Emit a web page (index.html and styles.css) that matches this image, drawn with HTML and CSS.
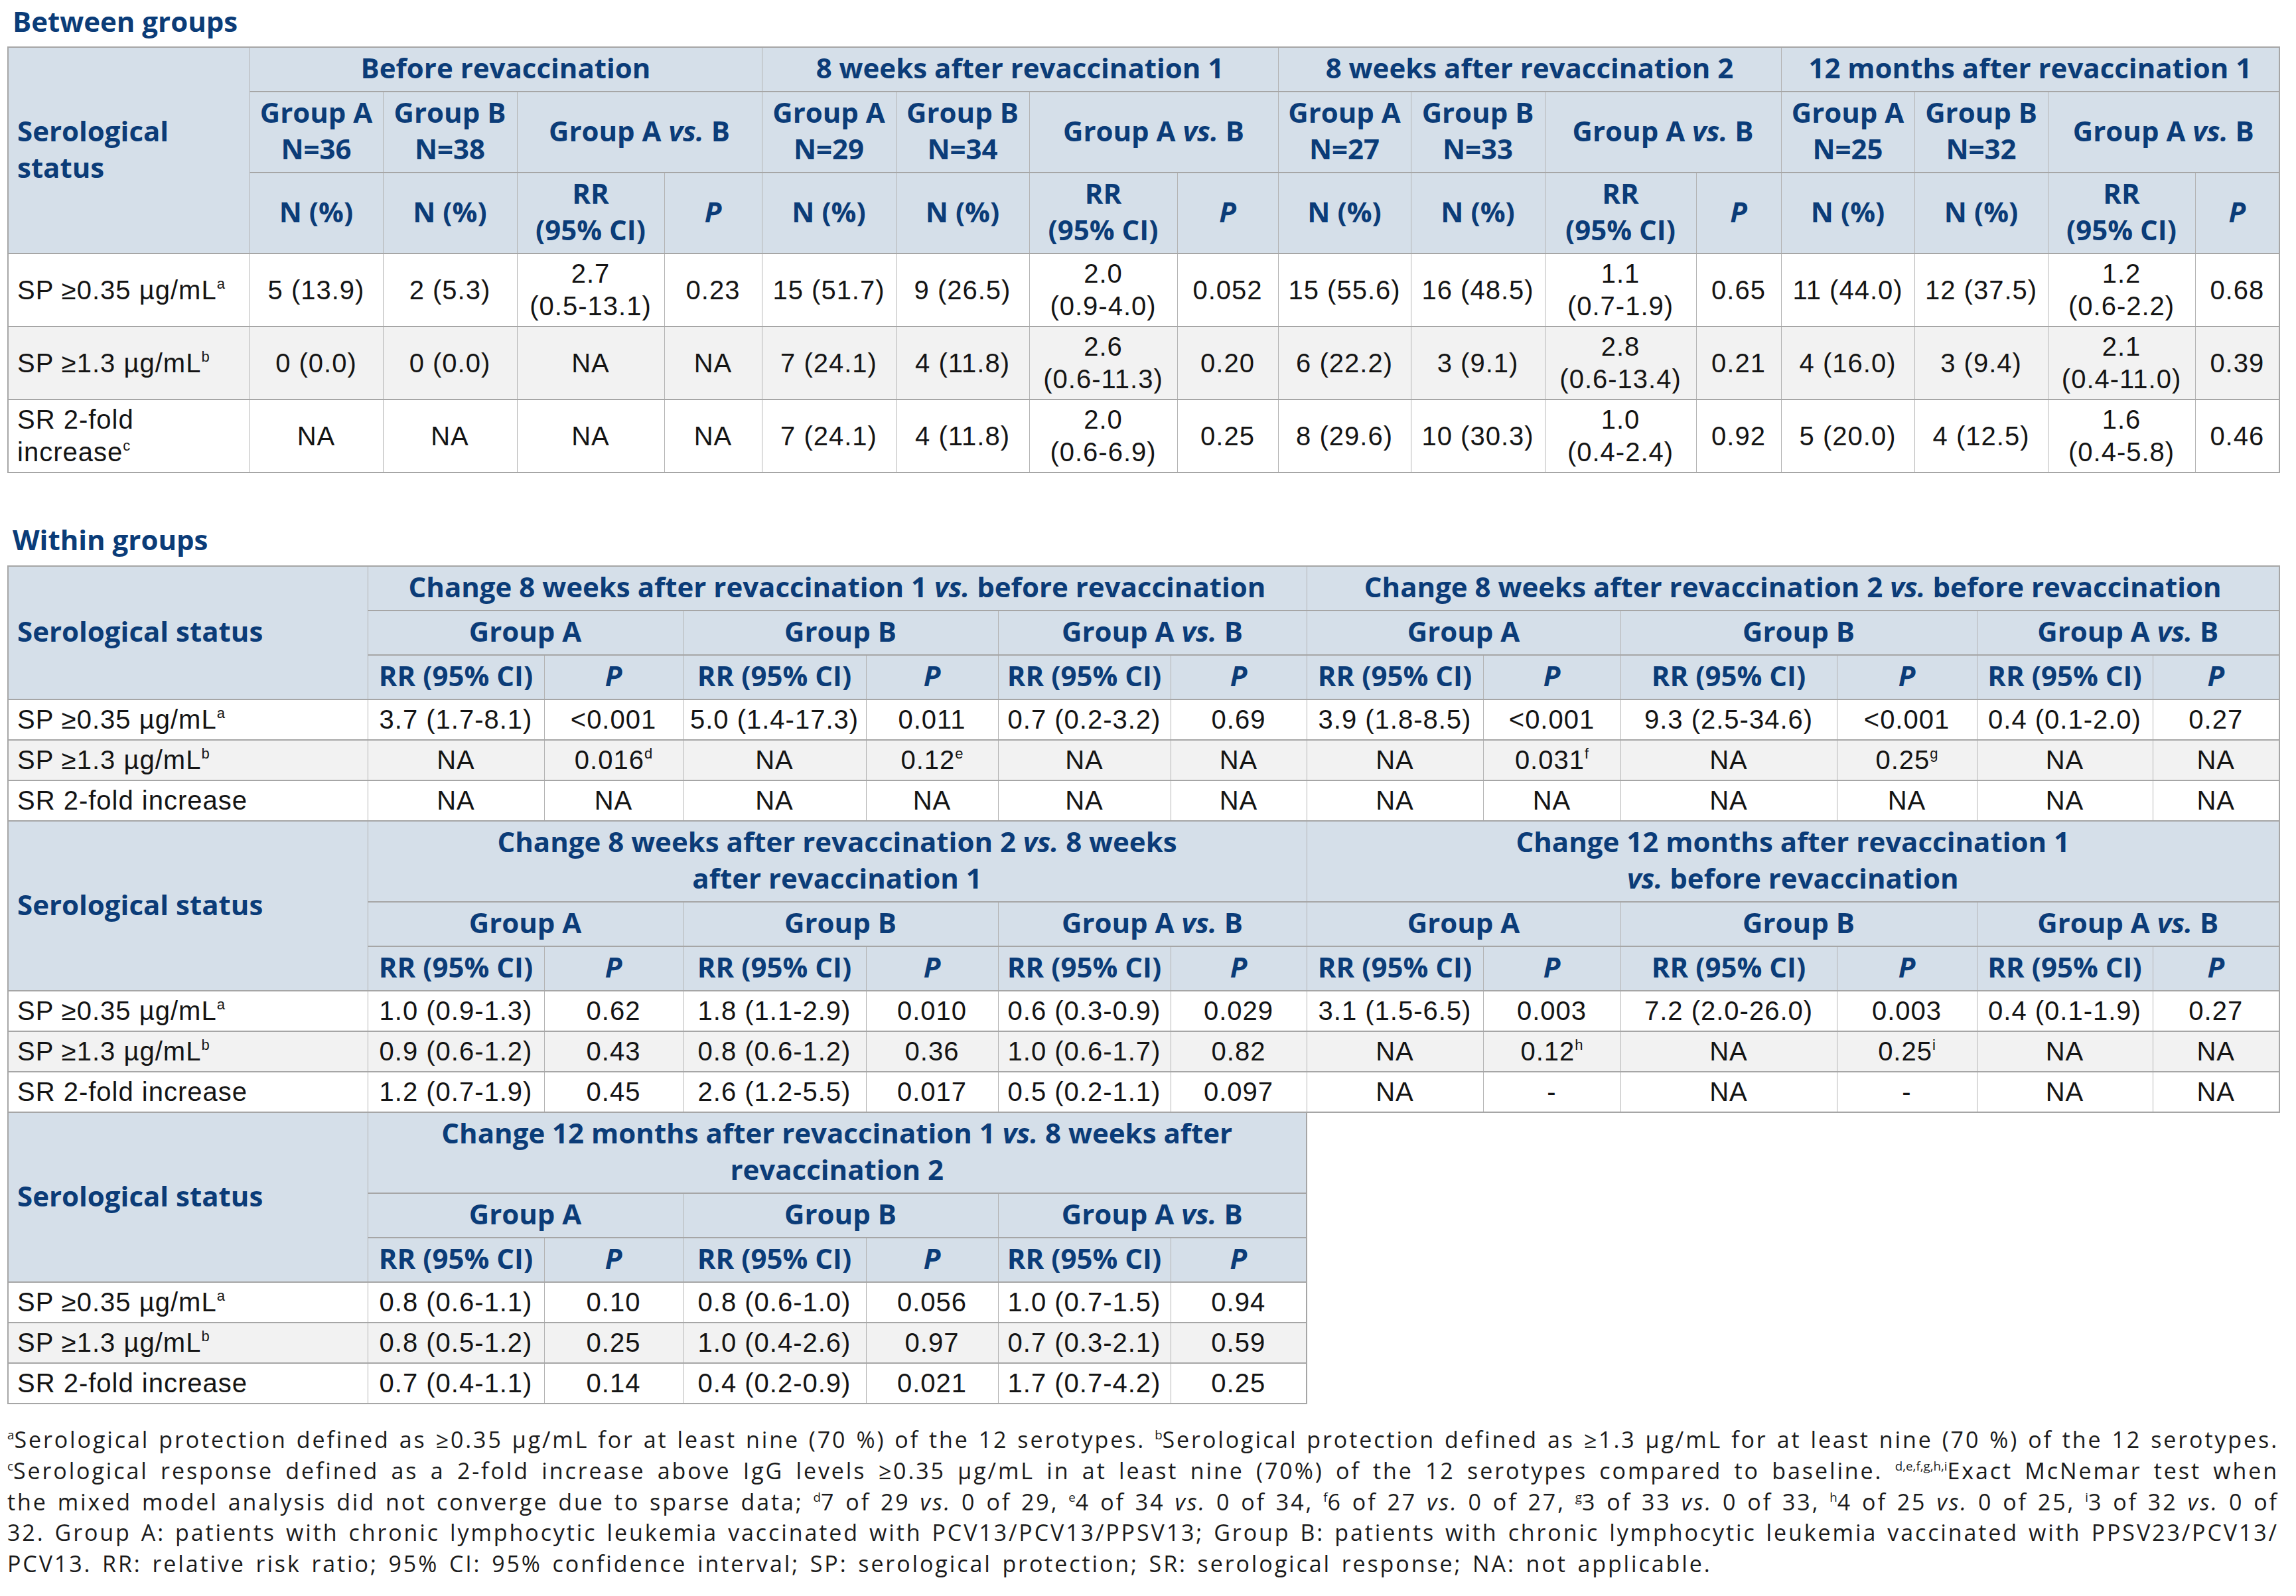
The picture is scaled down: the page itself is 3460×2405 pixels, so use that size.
FILE: index.html
```html
<!DOCTYPE html>
<html lang="en">
<head>
<meta charset="utf-8">
<title>Serological status</title>
<link rel="stylesheet" href="styles.css">
</head>
<body>
<h2 class="section-title first">Between groups</h2>
<table class="grid t1">
  <colgroup>
    <col><col><col><col><col><col><col><col><col><col><col><col><col><col><col><col><col>
  </colgroup>
  <thead>
    <tr>
      <th class="stub" rowspan="3">Serological<br>status</th>
      <th colspan="4">Before revaccination</th>
      <th colspan="4">8 weeks after revaccination 1</th>
      <th colspan="4">8 weeks after revaccination 2</th>
      <th colspan="4">12 months after revaccination 1</th>
    </tr>
    <tr>
      <th>Group A<br>N=36</th><th>Group B<br>N=38</th><th colspan="2">Group A <i>vs.</i> B</th>
      <th>Group A<br>N=29</th><th>Group B<br>N=34</th><th colspan="2">Group A <i>vs.</i> B</th>
      <th>Group A<br>N=27</th><th>Group B<br>N=33</th><th colspan="2">Group A <i>vs.</i> B</th>
      <th>Group A<br>N=25</th><th>Group B<br>N=32</th><th colspan="2">Group A <i>vs.</i> B</th>
    </tr>
    <tr>
      <th>N (%)</th><th>N (%)</th><th>RR<br>(95% CI)</th><th><i>P</i></th>
      <th>N (%)</th><th>N (%)</th><th>RR<br>(95% CI)</th><th><i>P</i></th>
      <th>N (%)</th><th>N (%)</th><th>RR<br>(95% CI)</th><th><i>P</i></th>
      <th>N (%)</th><th>N (%)</th><th>RR<br>(95% CI)</th><th><i>P</i></th>
    </tr>
  </thead>
  <tbody>
    <tr>
      <td class="stub">SP ≥0.35 µg/mL<sup>a</sup></td>
      <td>5 (13.9)</td><td>2 (5.3)</td><td>2.7<br>(0.5-13.1)</td><td>0.23</td>
      <td>15 (51.7)</td><td>9 (26.5)</td><td>2.0<br>(0.9-4.0)</td><td>0.052</td>
      <td>15 (55.6)</td><td>16 (48.5)</td><td>1.1<br>(0.7-1.9)</td><td>0.65</td>
      <td>11 (44.0)</td><td>12 (37.5)</td><td>1.2<br>(0.6-2.2)</td><td>0.68</td>
    </tr>
    <tr class="alt">
      <td class="stub">SP ≥1.3 µg/mL<sup>b</sup></td>
      <td>0 (0.0)</td><td>0 (0.0)</td><td>NA</td><td>NA</td>
      <td>7 (24.1)</td><td>4 (11.8)</td><td>2.6<br>(0.6-11.3)</td><td>0.20</td>
      <td>6 (22.2)</td><td>3 (9.1)</td><td>2.8<br>(0.6-13.4)</td><td>0.21</td>
      <td>4 (16.0)</td><td>3 (9.4)</td><td>2.1<br>(0.4-11.0)</td><td>0.39</td>
    </tr>
    <tr>
      <td class="stub">SR 2-fold<br>increase<sup>c</sup></td>
      <td>NA</td><td>NA</td><td>NA</td><td>NA</td>
      <td>7 (24.1)</td><td>4 (11.8)</td><td>2.0<br>(0.6-6.9)</td><td>0.25</td>
      <td>8 (29.6)</td><td>10 (30.3)</td><td>1.0<br>(0.4-2.4)</td><td>0.92</td>
      <td>5 (20.0)</td><td>4 (12.5)</td><td>1.6<br>(0.4-5.8)</td><td>0.46</td>
    </tr>
  </tbody>
</table>

<h2 class="section-title second">Within groups</h2>
<table class="grid t2">
  <colgroup>
    <col><col><col><col><col><col><col><col><col><col><col><col><col>
  </colgroup>
  <tbody>
    <tr>
      <th class="stub" rowspan="3">Serological status</th>
      <th colspan="6">Change 8 weeks after revaccination 1 <i>vs.</i> before revaccination</th>
      <th colspan="6">Change 8 weeks after revaccination 2 <i>vs.</i> before revaccination</th>
    </tr>
    <tr>
      <th colspan="2">Group A</th><th colspan="2">Group B</th><th colspan="2">Group A <i>vs.</i> B</th>
      <th colspan="2">Group A</th><th colspan="2">Group B</th><th colspan="2">Group A <i>vs.</i> B</th>
    </tr>
    <tr>
      <th>RR (95% CI)</th><th><i>P</i></th><th>RR (95% CI)</th><th><i>P</i></th><th>RR (95% CI)</th><th><i>P</i></th>
      <th>RR (95% CI)</th><th><i>P</i></th><th>RR (95% CI)</th><th><i>P</i></th><th>RR (95% CI)</th><th><i>P</i></th>
    </tr>
    <tr>
      <td class="stub">SP ≥0.35 µg/mL<sup>a</sup></td>
      <td>3.7 (1.7-8.1)</td><td>&lt;0.001</td><td>5.0 (1.4-17.3)</td><td>0.011</td><td>0.7 (0.2-3.2)</td><td>0.69</td>
      <td>3.9 (1.8-8.5)</td><td>&lt;0.001</td><td>9.3 (2.5-34.6)</td><td>&lt;0.001</td><td>0.4 (0.1-2.0)</td><td>0.27</td>
    </tr>
    <tr class="alt">
      <td class="stub">SP ≥1.3 µg/mL<sup>b</sup></td>
      <td>NA</td><td>0.016<sup>d</sup></td><td>NA</td><td>0.12<sup>e</sup></td><td>NA</td><td>NA</td>
      <td>NA</td><td>0.031<sup>f</sup></td><td>NA</td><td>0.25<sup>g</sup></td><td>NA</td><td>NA</td>
    </tr>
    <tr>
      <td class="stub">SR 2-fold increase</td>
      <td>NA</td><td>NA</td><td>NA</td><td>NA</td><td>NA</td><td>NA</td>
      <td>NA</td><td>NA</td><td>NA</td><td>NA</td><td>NA</td><td>NA</td>
    </tr>

    <tr>
      <th class="stub" rowspan="3">Serological status</th>
      <th colspan="6">Change 8 weeks after revaccination 2 <i>vs.</i> 8 weeks<br>after revaccination 1</th>
      <th colspan="6">Change 12 months after revaccination 1<br><i>vs.</i> before revaccination</th>
    </tr>
    <tr>
      <th colspan="2">Group A</th><th colspan="2">Group B</th><th colspan="2">Group A <i>vs.</i> B</th>
      <th colspan="2">Group A</th><th colspan="2">Group B</th><th colspan="2">Group A <i>vs.</i> B</th>
    </tr>
    <tr>
      <th>RR (95% CI)</th><th><i>P</i></th><th>RR (95% CI)</th><th><i>P</i></th><th>RR (95% CI)</th><th><i>P</i></th>
      <th>RR (95% CI)</th><th><i>P</i></th><th>RR (95% CI)</th><th><i>P</i></th><th>RR (95% CI)</th><th><i>P</i></th>
    </tr>
    <tr>
      <td class="stub">SP ≥0.35 µg/mL<sup>a</sup></td>
      <td>1.0 (0.9-1.3)</td><td>0.62</td><td>1.8 (1.1-2.9)</td><td>0.010</td><td>0.6 (0.3-0.9)</td><td>0.029</td>
      <td>3.1 (1.5-6.5)</td><td>0.003</td><td>7.2 (2.0-26.0)</td><td>0.003</td><td>0.4 (0.1-1.9)</td><td>0.27</td>
    </tr>
    <tr class="alt">
      <td class="stub">SP ≥1.3 µg/mL<sup>b</sup></td>
      <td>0.9 (0.6-1.2)</td><td>0.43</td><td>0.8 (0.6-1.2)</td><td>0.36</td><td>1.0 (0.6-1.7)</td><td>0.82</td>
      <td>NA</td><td>0.12<sup>h</sup></td><td>NA</td><td>0.25<sup>i</sup></td><td>NA</td><td>NA</td>
    </tr>
    <tr>
      <td class="stub">SR 2-fold increase</td>
      <td>1.2 (0.7-1.9)</td><td>0.45</td><td>2.6 (1.2-5.5)</td><td>0.017</td><td>0.5 (0.2-1.1)</td><td>0.097</td>
      <td>NA</td><td>-</td><td>NA</td><td>-</td><td>NA</td><td>NA</td>
    </tr>

    <tr>
      <th class="stub" rowspan="3">Serological status</th>
      <th colspan="6">Change 12 months after revaccination 1 <i>vs.</i> 8 weeks after<br>revaccination 2</th>
    </tr>
    <tr>
      <th colspan="2">Group A</th><th colspan="2">Group B</th><th colspan="2">Group A <i>vs.</i> B</th>
    </tr>
    <tr>
      <th>RR (95% CI)</th><th><i>P</i></th><th>RR (95% CI)</th><th><i>P</i></th><th>RR (95% CI)</th><th><i>P</i></th>
    </tr>
    <tr>
      <td class="stub">SP ≥0.35 µg/mL<sup>a</sup></td>
      <td>0.8 (0.6-1.1)</td><td>0.10</td><td>0.8 (0.6-1.0)</td><td>0.056</td><td>1.0 (0.7-1.5)</td><td>0.94</td>
    </tr>
    <tr class="alt">
      <td class="stub">SP ≥1.3 µg/mL<sup>b</sup></td>
      <td>0.8 (0.5-1.2)</td><td>0.25</td><td>1.0 (0.4-2.6)</td><td>0.97</td><td>0.7 (0.3-2.1)</td><td>0.59</td>
    </tr>
    <tr>
      <td class="stub">SR 2-fold increase</td>
      <td>0.7 (0.4-1.1)</td><td>0.14</td><td>0.4 (0.2-0.9)</td><td>0.021</td><td>1.7 (0.7-4.2)</td><td>0.25</td>
    </tr>
  </tbody>
</table>

<p class="notes">
  <span class="line"><sup>a</sup>Serological protection defined as ≥0.35 µg/mL for at least nine (70 %) of the 12 serotypes. <sup>b</sup>Serological protection defined as ≥1.3 µg/mL for at least nine (70 %) of the 12 serotypes.</span>
  <span class="line"><sup>c</sup>Serological response defined as a 2-fold increase above IgG levels ≥0.35 µg/mL in at least nine (70%) of the 12 serotypes compared to baseline. <sup>d,e,f,g,h,i</sup>Exact McNemar test when</span>
  <span class="line">the mixed model analysis did not converge due to sparse data; <sup>d</sup>7 of 29 <i>vs.</i> 0 of 29, <sup>e</sup>4 of 34 <i>vs.</i> 0 of 34, <sup>f</sup>6 of 27 <i>vs.</i> 0 of 27, <sup>g</sup>3 of 33 <i>vs.</i> 0 of 33, <sup>h</sup>4 of 25 <i>vs.</i> 0 of 25, <sup>i</sup>3 of 32 <i>vs.</i> 0 of</span>
  <span class="line">32. Group A: patients with chronic lymphocytic leukemia vaccinated with PCV13/PCV13/PPSV13; Group B: patients with chronic lymphocytic leukemia vaccinated with PPSV23/PCV13/</span>
  <span class="line last">PCV13. RR: relative risk ratio; 95% CI: 95% confidence interval; SP: serological protection; SR: serological response; NA: not applicable.</span>
</p>
</body>
</html>
```

FILE: styles.css
```css
html, body {
  background: #ffffff;
}

body {
  margin: 0;
  padding: 0 26px 0 11px;
  font-family: "Liberation Sans", Arial, sans-serif;
  color: #141414;
}

.section-title {
  font-family: "Open Sans", "Noto Sans", sans-serif;
  font-weight: 700;
  font-size: 42px;
  line-height: 57px;
  color: #0b3c78;
  margin: 0 0 0 8px;
}

.section-title.first {
  margin-top: 3px;
  margin-bottom: 10px;
}

.section-title.second {
  margin-top: 71px;
  margin-bottom: 11px;
}

.grid {
  border-collapse: collapse;
  table-layout: fixed;
  width: 3423px;
}

.grid th,
.grid td {
  border-left: 1px solid #b3b3b3;
  border-right: 1px solid #b3b3b3;
  border-top: 2px solid #a6a6a6;
  border-bottom: 2px solid #a6a6a6;
  text-align: center;
  vertical-align: middle;
  padding: 5px 8px;
}

.grid tr > :last-child {
  border-right: 2px solid #a6a6a6;
}

.grid .stub {
  text-align: left;
  padding-left: 13px;
  border-left: 2px solid #a6a6a6;
}

.grid th {
  background: #d5dfe9;
  color: #0b3c78;
  font-family: "Open Sans", "Noto Sans", sans-serif;
  font-weight: 700;
  font-size: 42px;
  line-height: 55px;
  padding-top: 2px;
  padding-bottom: 8px;
}

.grid td {
  background: #ffffff;
  font-size: 40px;
  letter-spacing: 1px;
  line-height: 49px;
  color: #141414;
}

.grid tr.alt td {
  background: #f2f2f2;
}

sup {
  font-size: 0.55em;
  line-height: 0;
  vertical-align: 0.72em;
  letter-spacing: 0;
}

/* column widths: between groups */
.t1 col:nth-child(1) { width: 364px; }
.t1 col:nth-child(2) { width: 201px; }
.t1 col:nth-child(3) { width: 202px; }
.t1 col:nth-child(4) { width: 222px; }
.t1 col:nth-child(5) { width: 147px; }
.t1 col:nth-child(6) { width: 202px; }
.t1 col:nth-child(7) { width: 201px; }
.t1 col:nth-child(8) { width: 223px; }
.t1 col:nth-child(9) { width: 152px; }
.t1 col:nth-child(10) { width: 200px; }
.t1 col:nth-child(11) { width: 202px; }
.t1 col:nth-child(12) { width: 228px; }
.t1 col:nth-child(13) { width: 128px; }
.t1 col:nth-child(14) { width: 201px; }
.t1 col:nth-child(15) { width: 201px; }
.t1 col:nth-child(16) { width: 222px; }
.t1 col:nth-child(17) { width: 127px; }

/* column widths: within groups */
.t2 col:nth-child(1) { width: 542px; }
.t2 col:nth-child(2) { width: 266px; }
.t2 col:nth-child(3) { width: 209px; }
.t2 col:nth-child(4) { width: 276px; }
.t2 col:nth-child(5) { width: 199px; }
.t2 col:nth-child(6) { width: 260px; }
.t2 col:nth-child(7) { width: 205px; }
.t2 col:nth-child(8) { width: 266px; }
.t2 col:nth-child(9) { width: 207px; }
.t2 col:nth-child(10) { width: 326px; }
.t2 col:nth-child(11) { width: 211px; }
.t2 col:nth-child(12) { width: 265px; }
.t2 col:nth-child(13) { width: 191px; }

.notes {
  margin: 30px 0 0 0;
  width: 3423px;
  font-family: "Open Sans", "Noto Sans", sans-serif;
  font-size: 34px;
  letter-spacing: 2.9px;
  line-height: 46.75px;
  color: #1b1b1b;
}

.notes .line {
  display: block;
  white-space: nowrap;
  text-align: justify;
  text-align-last: justify;
}

.notes .line.last {
  text-align-last: left;
  word-spacing: 4px;
}
```
